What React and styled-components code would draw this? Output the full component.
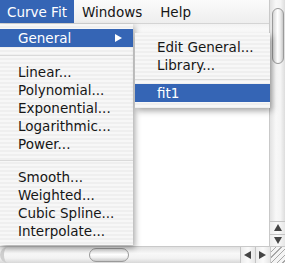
import React from 'react'
import styled, { createGlobalStyle } from 'styled-components'

const GlobalStyle = createGlobalStyle`
    body {
        margin: 0;
        background: #ffffff;
        font-family: "DejaVu Sans", "Liberation Sans", sans-serif;
    }
`

const pinstripe = `repeating-linear-gradient(180deg, #f7f7f7 0px, #f7f7f7 2px, #efefef 2px, #efefef 4px)`

const Screen = styled.div`
    position: relative;
    width: 285px;
    height: 263px;
    overflow: hidden;
    display: grid;
    grid-template-columns: 1fr 15px;
    grid-template-rows: 1fr 17px;
    background: #ffffff;
    font-size: 13.5px;
    color: #161616;
`

const MainPane = styled.div`
    display: flex;
    flex-direction: column;
    min-width: 0;
    border-right: 1px solid #c9c9c9;
`

const MenuBar = styled.div`
    display: flex;
    height: 24px;
    background: linear-gradient(180deg, #fbfbfb, #eeeeee);
    border-bottom: 1px solid #d4d4d4;
    box-sizing: border-box;
`

const MenuTitle = styled.div`
    display: flex;
    align-items: center;
    padding: 0 ${p => p.$pad || 8}px;
    background: ${p => (p.$active ? '#3565b5' : 'transparent')};
    color: ${p => (p.$active ? '#ffffff' : '#161616')};
`

const Toolbar = styled.div`
    height: 10px;
    background: linear-gradient(180deg, #f2f2f2, #ffffff);
`

const Content = styled.div`
    flex: 1;
    background: #ffffff;
`

const VScroll = styled.div`
    display: flex;
    flex-direction: column;
    background: linear-gradient(90deg, #e2e2e2, #f8f8f8 40%, #f4f4f4 70%, #dddddd);
`

const VTrack = styled.div`
    flex: 1;
    padding: 8px 1px 0 2px;
`

const VThumb = styled.div`
    height: 54px;
    border: 1px solid #9a9a9a;
    border-radius: 6px;
    background: linear-gradient(90deg, #d6d6d6, #ffffff 45%, #f0f0f0 70%, #c8c8c8);
`

const ArrowButton = styled.div`
    display: flex;
    align-items: center;
    justify-content: center;
    width: ${p => p.$w || 15}px;
    height: ${p => p.$h || 13}px;
    border-${p => p.$edge || 'top'}: 1px solid #c4c4c4;
    box-sizing: border-box;
    background: linear-gradient(90deg, #ececec, #fafafa 50%, #e6e6e6);
`

const HScroll = styled.div`
    display: flex;
    align-items: stretch;
    border-top: 1px solid #c9c9c9;
    background: linear-gradient(180deg, #e0e0e0, #f8f8f8 40%, #f2f2f2 70%, #d8d8d8);
`

const HTrack = styled.div`
    flex: 1;
    display: flex;
    align-items: center;
    padding-left: 85px;
    border-left: 4px solid #cfcfcf;
    border-radius: 8px 0 0 8px;
`

const HThumb = styled.div`
    width: 38px;
    height: 12px;
    border: 1px solid #9a9a9a;
    border-radius: 7px;
    background: linear-gradient(180deg, #d6d6d6, #ffffff 45%, #f0f0f0 70%, #c8c8c8);
`

const Grip = styled.div`
    border-top: 1px solid #c9c9c9;
    border-left: 1px solid #c9c9c9;
    background: repeating-linear-gradient(135deg, #f4f4f4 0px, #f4f4f4 3px, #a8a8a8 3px, #a8a8a8 4px);
`

const Menu = styled.div`
    position: absolute;
    left: ${p => p.$left}px;
    top: ${p => p.$top}px;
    width: ${p => p.$width}px;
    padding: 5px 0 ${p => p.$bottom || 5}px;
    background: ${pinstripe};
    box-shadow: 2px 3px 6px rgba(0, 0, 0, 0.35);
    box-sizing: border-box;
`

const Item = styled.div`
    display: flex;
    align-items: center;
    justify-content: space-between;
    height: 18px;
    padding: 0 10px 0 ${p => p.$indent || 18}px;
    white-space: nowrap;
    background: ${p => (p.$active ? '#3565b5' : 'transparent')};
    color: ${p => (p.$active ? '#ffffff' : '#161616')};
`

const Separator = styled.div`
    height: ${p => p.$h || 15}px;
    display: flex;
    align-items: center;

    &::after {
        content: '';
        flex: 1;
        height: 1px;
        background: #dadada;
    }
`

const Tri = ({ dir, color = '#444', size = 7 }) => {
    const pts = {
        right: '0,0 7,4 0,8',
        left: '7,0 0,4 7,8',
        up: '0,7 4,0 8,7',
        down: '0,0 8,0 4,7'
    }
    return (
        <svg width={size + 1} height={size + 1} viewBox="0 0 8 8">
            <polygon points={pts[dir]} fill={color} />
        </svg>
    )
}

const fitItems = ['Linear...', 'Polynomial...', 'Exponential...', 'Logarithmic...', 'Power...']
const otherItems = ['Smooth...', 'Weighted...', 'Cubic Spline...', 'Interpolate...']

export default function App() {
    return (
        <>
            <GlobalStyle />
            <Screen>
                <MainPane>
                    <MenuBar>
                        <MenuTitle $active $pad={7}>Curve Fit</MenuTitle>
                        <MenuTitle $pad={8}>Windows</MenuTitle>
                        <MenuTitle $pad={10}>Help</MenuTitle>
                    </MenuBar>
                    <Toolbar />
                    <Content />
                </MainPane>
                <VScroll>
                    <VTrack>
                        <VThumb />
                    </VTrack>
                    <ArrowButton><Tri dir="up" /></ArrowButton>
                    <ArrowButton $h={12}><Tri dir="down" /></ArrowButton>
                </VScroll>
                <HScroll>
                    <HTrack>
                        <HThumb />
                    </HTrack>
                    <ArrowButton $edge="left" $w={15} $h={16}><Tri dir="left" /></ArrowButton>
                    <ArrowButton $edge="left" $w={15} $h={16}><Tri dir="right" /></ArrowButton>
                </HScroll>
                <Grip />

                <Menu $left={0} $top={24} $width={133}>
                    <Item $active>
                        <span>General</span>
                        <Tri dir="right" color="#ffffff" />
                    </Item>
                    <Separator $h={16} />
                    {fitItems.map(label => <Item key={label}>{label}</Item>)}
                    <Separator />
                    {otherItems.map(label => <Item key={label}>{label}</Item>)}
                </Menu>

                <Menu $left={135} $top={33} $width={135} $bottom={6}>
                    <Item $indent={22}>Edit General...</Item>
                    <Item $indent={22}>Library...</Item>
                    <Separator $h={10} />
                    <Item $indent={22} $active>fit1</Item>
                </Menu>
            </Screen>
        </>
    )
}
